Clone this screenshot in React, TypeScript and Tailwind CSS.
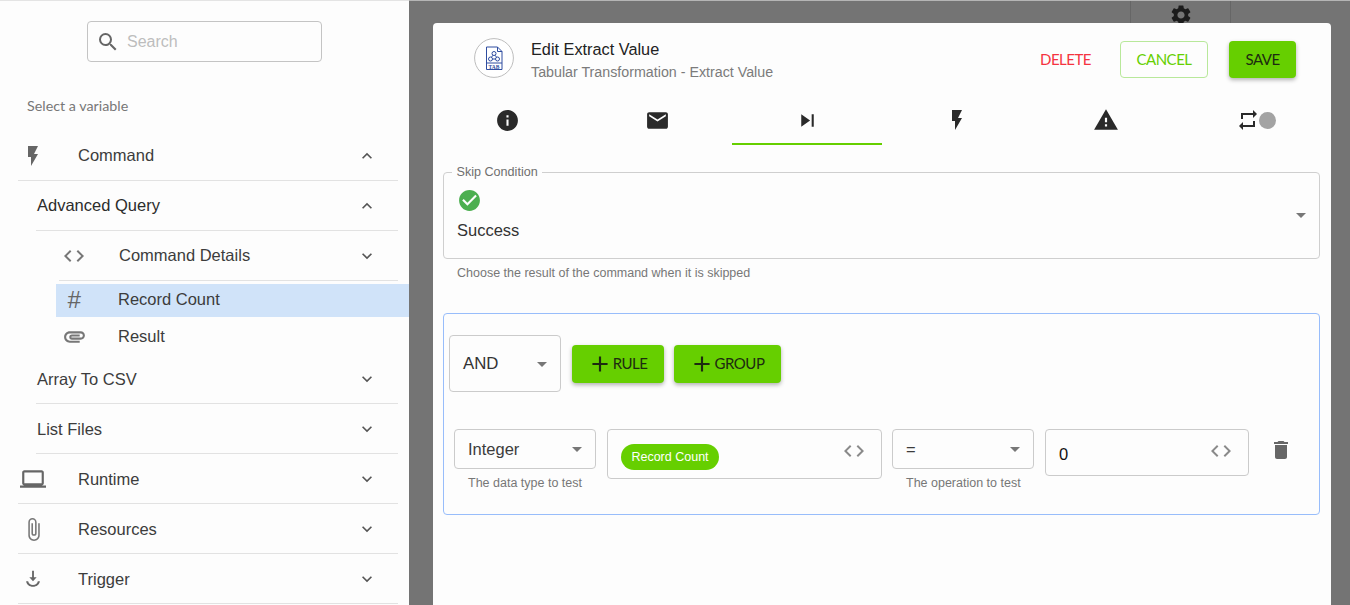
import type { ReactNode } from "react"
import {
  MdAdd,
  MdArrowDropDown,
  MdAttachFile,
  MdAttachment,
  MdCheckCircle,
  MdCode,
  MdDelete,
  MdEmail,
  MdExpandLess,
  MdExpandMore,
  MdFlashOn,
  MdInfo,
  MdLaptop,
  MdRepeat,
  MdSearch,
  MdSettings,
  MdSkipNext,
  MdWarning,
} from "react-icons/md"

const sans = "font-['Liberation_Sans',Arial,sans-serif]"
const lato = "font-['Lato',sans-serif]"

function TriggerIcon() {
  return (
    <svg viewBox="0 0 24 24" className="h-[22px] w-[22px] fill-[#666]">
      <path d="M11 3h2v7h3l-4 4.5L8 10h3z" />
      <path d="M4.5 14.5h2.2c.5 2.4 2.6 4 5.3 4s4.8-1.6 5.3-4h2.2c-.5 3.6-3.6 6-7.5 6s-7-2.4-7.5-6z" />
    </svg>
  )
}

function TabFileIcon() {
  return (
    <svg viewBox="0 0 40 40" className="h-[40px] w-[40px] shrink-0" fill="none" stroke="#2f4da0" strokeWidth="1">
      <circle cx="20" cy="20" r="19.4" stroke="#bdbdbd" fill="#fff" />
      <path d="M12.5 9h11l4.5 4.500v18h-15.500z" />
      <path d="M23.500 9v4.500h4.500" />
      <path d="M12.500 25h15.500" />
      <circle cx="20" cy="15.500" r="2" />
      <circle cx="16.500" cy="21" r="2" />
      <circle cx="23.500" cy="21" r="2" />
      <path d="M19 17.200l-1.500 2M21 17.200l1.500 2M18.500 21h3" />
      <text x="20" y="30.500" textAnchor="middle" fontSize="5.500" fontWeight="700" fill="#2f4da0" stroke="none" fontFamily="Liberation Serif, serif">
        TAB
      </text>
    </svg>
  )
}

interface NavRowProps {
  icon?: ReactNode
  label: string
  open?: boolean
  text: string
  labelClass?: string
  lower?: boolean
}

function NavRow({ icon, label, open, text, labelClass, lower }: NavRowProps) {
  return (
    <div className={`flex h-[50px] items-center border-b border-[#e2e2e2] ${lower ? "pt-[1px]" : ""}`}>
      {icon && <div className="flex w-[30px] justify-center">{icon}</div>}
      <span className={`text-[16.5px] ${text} ${labelClass ?? "text-[#3c3c3c]"}`}>{label}</span>
      <div className="ml-auto mr-[21px] flex w-[20px] justify-center">
        {open ? (
          <MdExpandLess className="h-[20px] w-[20px] text-[#555]" />
        ) : (
          <MdExpandMore className="h-[20px] w-[20px] text-[#555]" />
        )}
      </div>
    </div>
  )
}

function Sidebar() {
  return (
    <aside className={`h-full w-[409px] shrink-0 overflow-hidden border-t border-[#e4e4e4] bg-[#fdfdfd] ${sans}`}>
      <div className="ml-[87px] mt-[20px] flex h-[41px] w-[235px] items-center rounded-[4px] border border-[#c4c4c4] pl-[8px]">
        <MdSearch className="h-[24px] w-[24px] text-[#666]" />
        <span className="ml-[7px] text-[16px] text-[#bdbdbd]">Search</span>
      </div>
      <div className={`ml-[27px] mt-[35px] text-[14.3px] leading-[18px] text-[#777] ${lato}`}>Select a variable</div>
      <div className="mt-[16px] pl-[18px] pr-[11px]">
        <NavRow icon={<MdFlashOn className="h-[24px] w-[24px] text-[#666]" />} label="Command" open text="ml-[30px]" />
      </div>
      <div className="pl-[36px] pr-[11px]">
        <NavRow label="Advanced Query" open text="ml-[1px]" labelClass="text-[#2c2c2c]" />
      </div>
      <div className="pl-[59px] pr-[11px]">
        <NavRow icon={<MdCode className="h-[24px] w-[24px] text-[#777]" />} label="Command Details" text="ml-[30px]" />
      </div>
      <div className="ml-[56px] mt-[3px] flex h-[33px] items-center bg-[#d0e3f9] pb-[2px]">
        <div className="flex w-[36px] justify-center text-[24px] italic leading-[30px] text-[#666]">#</div>
        <span className="ml-[26px] text-[16.5px] text-[#3c3c3c]">Record Count</span>
      </div>
      <div className="ml-[56px] flex h-[38px] items-center">
        <div className="flex w-[36px] justify-center">
          <MdAttachment className="h-[25px] w-[25px] text-[#777]" />
        </div>
        <span className="ml-[26px] text-[16.5px] text-[#3c3c3c]">Result</span>
      </div>
      <div className="-mt-[1px] pl-[36px] pr-[11px]">
        <NavRow label="Array To CSV" text="ml-[1px]" lower />
        <NavRow label="List Files" text="ml-[1px]" lower />
      </div>
      <div className="pl-[18px] pr-[11px]">
        <NavRow icon={<MdLaptop className="h-[26px] w-[26px] text-[#666]" />} label="Runtime" text="ml-[30px]" lower />
        <NavRow icon={<MdAttachFile className="h-[25px] w-[25px] text-[#777]" />} label="Resources" text="ml-[30px]" lower />
        <NavRow icon={<TriggerIcon />} label="Trigger" text="ml-[30px]" lower />
      </div>
    </aside>
  )
}

function SelectBox({ label, className, text = "text-[16.5px] text-[#3c3c3c]" }: { label: string; className: string; text?: string }) {
  return (
    <div className={`flex items-center rounded-[4px] border border-[#cbcbcb] pr-[6px] ${className}`}>
      <span className={text}>{label}</span>
      <MdArrowDropDown className="ml-auto h-[24px] w-[24px] text-[#777]" />
    </div>
  )
}

function GreenButton({ label, className }: { label: string; className: string }) {
  return (
    <button className={`flex h-[38px] items-center justify-center rounded-[4px] bg-[#66cf00] text-[15px] tracking-[-0.5px] text-[#1d2b10] shadow-[0_2px_4px_rgba(0,0,0,0.3)] ${lato} ${className}`}>
      <MdAdd className="h-[26px] w-[26px]" />
      <span>{label}</span>
    </button>
  )
}

function Modal() {
  const tabs = [
    <MdInfo key="info" className="h-[25px] w-[25px]" />,
    <MdEmail key="email" className="h-[25px] w-[25px]" />,
    <MdSkipNext key="skip" className="h-[25px] w-[25px]" />,
    <MdFlashOn key="flash" className="h-[24px] w-[24px]" />,
    <MdWarning key="warning" className="h-[26px] w-[26px]" />,
    <div key="repeat" className="flex items-center">
      <MdRepeat className="-mr-[1px] h-[24px] w-[24px]" />
      <span className="h-[17px] w-[17px] rounded-full bg-[#a3a3a3]" />
    </div>,
  ]

  return (
    <section className={`ml-[24px] h-[582px] w-[898px] shrink-0 rounded-t-[4px] bg-[#fdfdfd] ${sans}`}>
      {/* Header */}
      <div className="flex h-[55px] items-start pl-[41px] pr-[35px] pt-[15px]">
        <TabFileIcon />
        <div className="ml-[17px] -mt-[1px]">
          <div className="text-[16.3px] leading-[24px] text-[#222]">Edit Extract Value</div>
          <div className="text-[14.25px] leading-[22px] text-[#7b7b7b]">Tabular Transformation - Extract Value</div>
        </div>
        <div className={`ml-auto mt-[3px] flex h-[37px] items-center text-[15px] tracking-[-0.5px] ${lato}`}>
          <span className="mr-[29px] text-[#f5333f]">DELETE</span>
          <span className="flex h-[37px] w-[88px] items-center justify-center rounded-[4px] border border-[#b8e89a] text-[#66cf00]">CANCEL</span>
          <span className="ml-[21px] flex h-[37px] w-[67px] items-center justify-center rounded-[4px] bg-[#66cf00] text-[#1d2b10] shadow-[0_2px_4px_rgba(0,0,0,0.3)]">SAVE</span>
        </div>
      </div>

      {/* Tabs */}
      <div className="mt-[9px] grid grid-cols-6">
        {tabs.map((tab, i) => (
          <div
            key={i}
            className={`flex h-[58px] items-center justify-center border-b-2 pt-[10px] text-[#2a2a2a] ${i === 2 ? "border-[#66cf00]" : "border-transparent"}`}
          >
            {tab}
          </div>
        ))}
      </div>

      {/* Skip condition */}
      <fieldset className="mx-[10px] mt-[20px] h-[94px] w-[877px] rounded-[4px] border border-[#cfcfcf] pl-[13px]">
        <legend className="-ml-[5px] px-[1px] text-[12.6px] leading-[15px] text-[#6f6f6f]">&nbsp;Skip Condition&nbsp;</legend>
        <div className="flex h-[78px] items-start">
          <div>
            <MdCheckCircle className="mt-[8px] h-[25px] w-[25px] text-[#4caf50]" />
            <div className="mt-[5px] text-[16.5px] leading-[24px] text-[#333]">Success</div>
          </div>
          <MdArrowDropDown className="ml-auto mr-[6px] mt-[23px] h-[24px] w-[24px] text-[#777]" />
        </div>
      </fieldset>
      <div className="ml-[24px] mt-[7px] text-[12.5px] leading-[15px] text-[#777]">Choose the result of the command when it is skipped</div>

      {/* Rule builder */}
      <div className="ml-[10px] mt-[32px] h-[202px] w-[877px] rounded-[4px] border border-[#98bdfb] pl-[5px] pt-[21px]">
        <div className="flex items-center gap-[10px]">
          <SelectBox label="AND" className="h-[57px] w-[112px] pl-[13px]" text="text-[16.8px] text-[#333]" />
          <GreenButton label="RULE" className="ml-[1px] w-[92px] pr-[2px]" />
          <GreenButton label="GROUP" className="w-[107px] pr-[2px]" />
        </div>
        <div className="ml-[5px] mt-[37px] flex items-start">
          <div>
            <SelectBox label="Integer" className="h-[40px] w-[142px] pl-[13px]" />
            <div className="ml-[14px] mt-[6px] text-[12.5px] leading-[16px] text-[#777]">The data type to test</div>
          </div>
          <div className="ml-[11px] flex h-[50px] w-[275px] items-start rounded-[4px] border border-[#cbcbcb] pl-[13px] pr-[15px]">
            <span className="mt-[14px] flex h-[26px] w-[98px] items-center justify-center rounded-full bg-[#66cf00] text-[12.5px] text-white">Record Count</span>
            <MdCode className="ml-auto mt-[9px] h-[24px] w-[24px] text-[#8a8a8a]" />
          </div>
          <div className="ml-[10px]">
            <SelectBox label="=" className="h-[40px] w-[142px] pl-[13px]" />
            <div className="ml-[14px] mt-[6px] text-[12.5px] leading-[16px] text-[#777]">The operation to test</div>
          </div>
          <div className="ml-[11px] flex h-[47px] w-[204px] items-start rounded-[4px] border border-[#cbcbcb] pl-[13px] pr-[15px]">
            <span className="mt-[12px] text-[16.5px] leading-[24px] text-[#111]">0</span>
            <MdCode className="ml-auto mt-[9px] h-[24px] w-[24px] text-[#8a8a8a]" />
          </div>
          <MdDelete className="ml-[20px] mt-[9px] h-[24px] w-[24px] text-[#666]" />
        </div>
      </div>
    </section>
  )
}

export default function App() {
  return (
    <div className="flex h-[605px] w-[1350px] overflow-hidden">
      <Sidebar />
      <main className="flex h-full flex-1 flex-col overflow-hidden border-t border-[#b5b5b5] bg-[#747474]">
        <div className="flex h-[22px] shrink-0 overflow-hidden">
          <div className="ml-[721px] flex h-[22px] w-[101px] justify-center border-x border-[#666]">
            <MdSettings className="mt-[2px] h-[24px] w-[24px] shrink-0 text-[#1c1c1c]" />
          </div>
        </div>
        <Modal />
      </main>
    </div>
  )
}
